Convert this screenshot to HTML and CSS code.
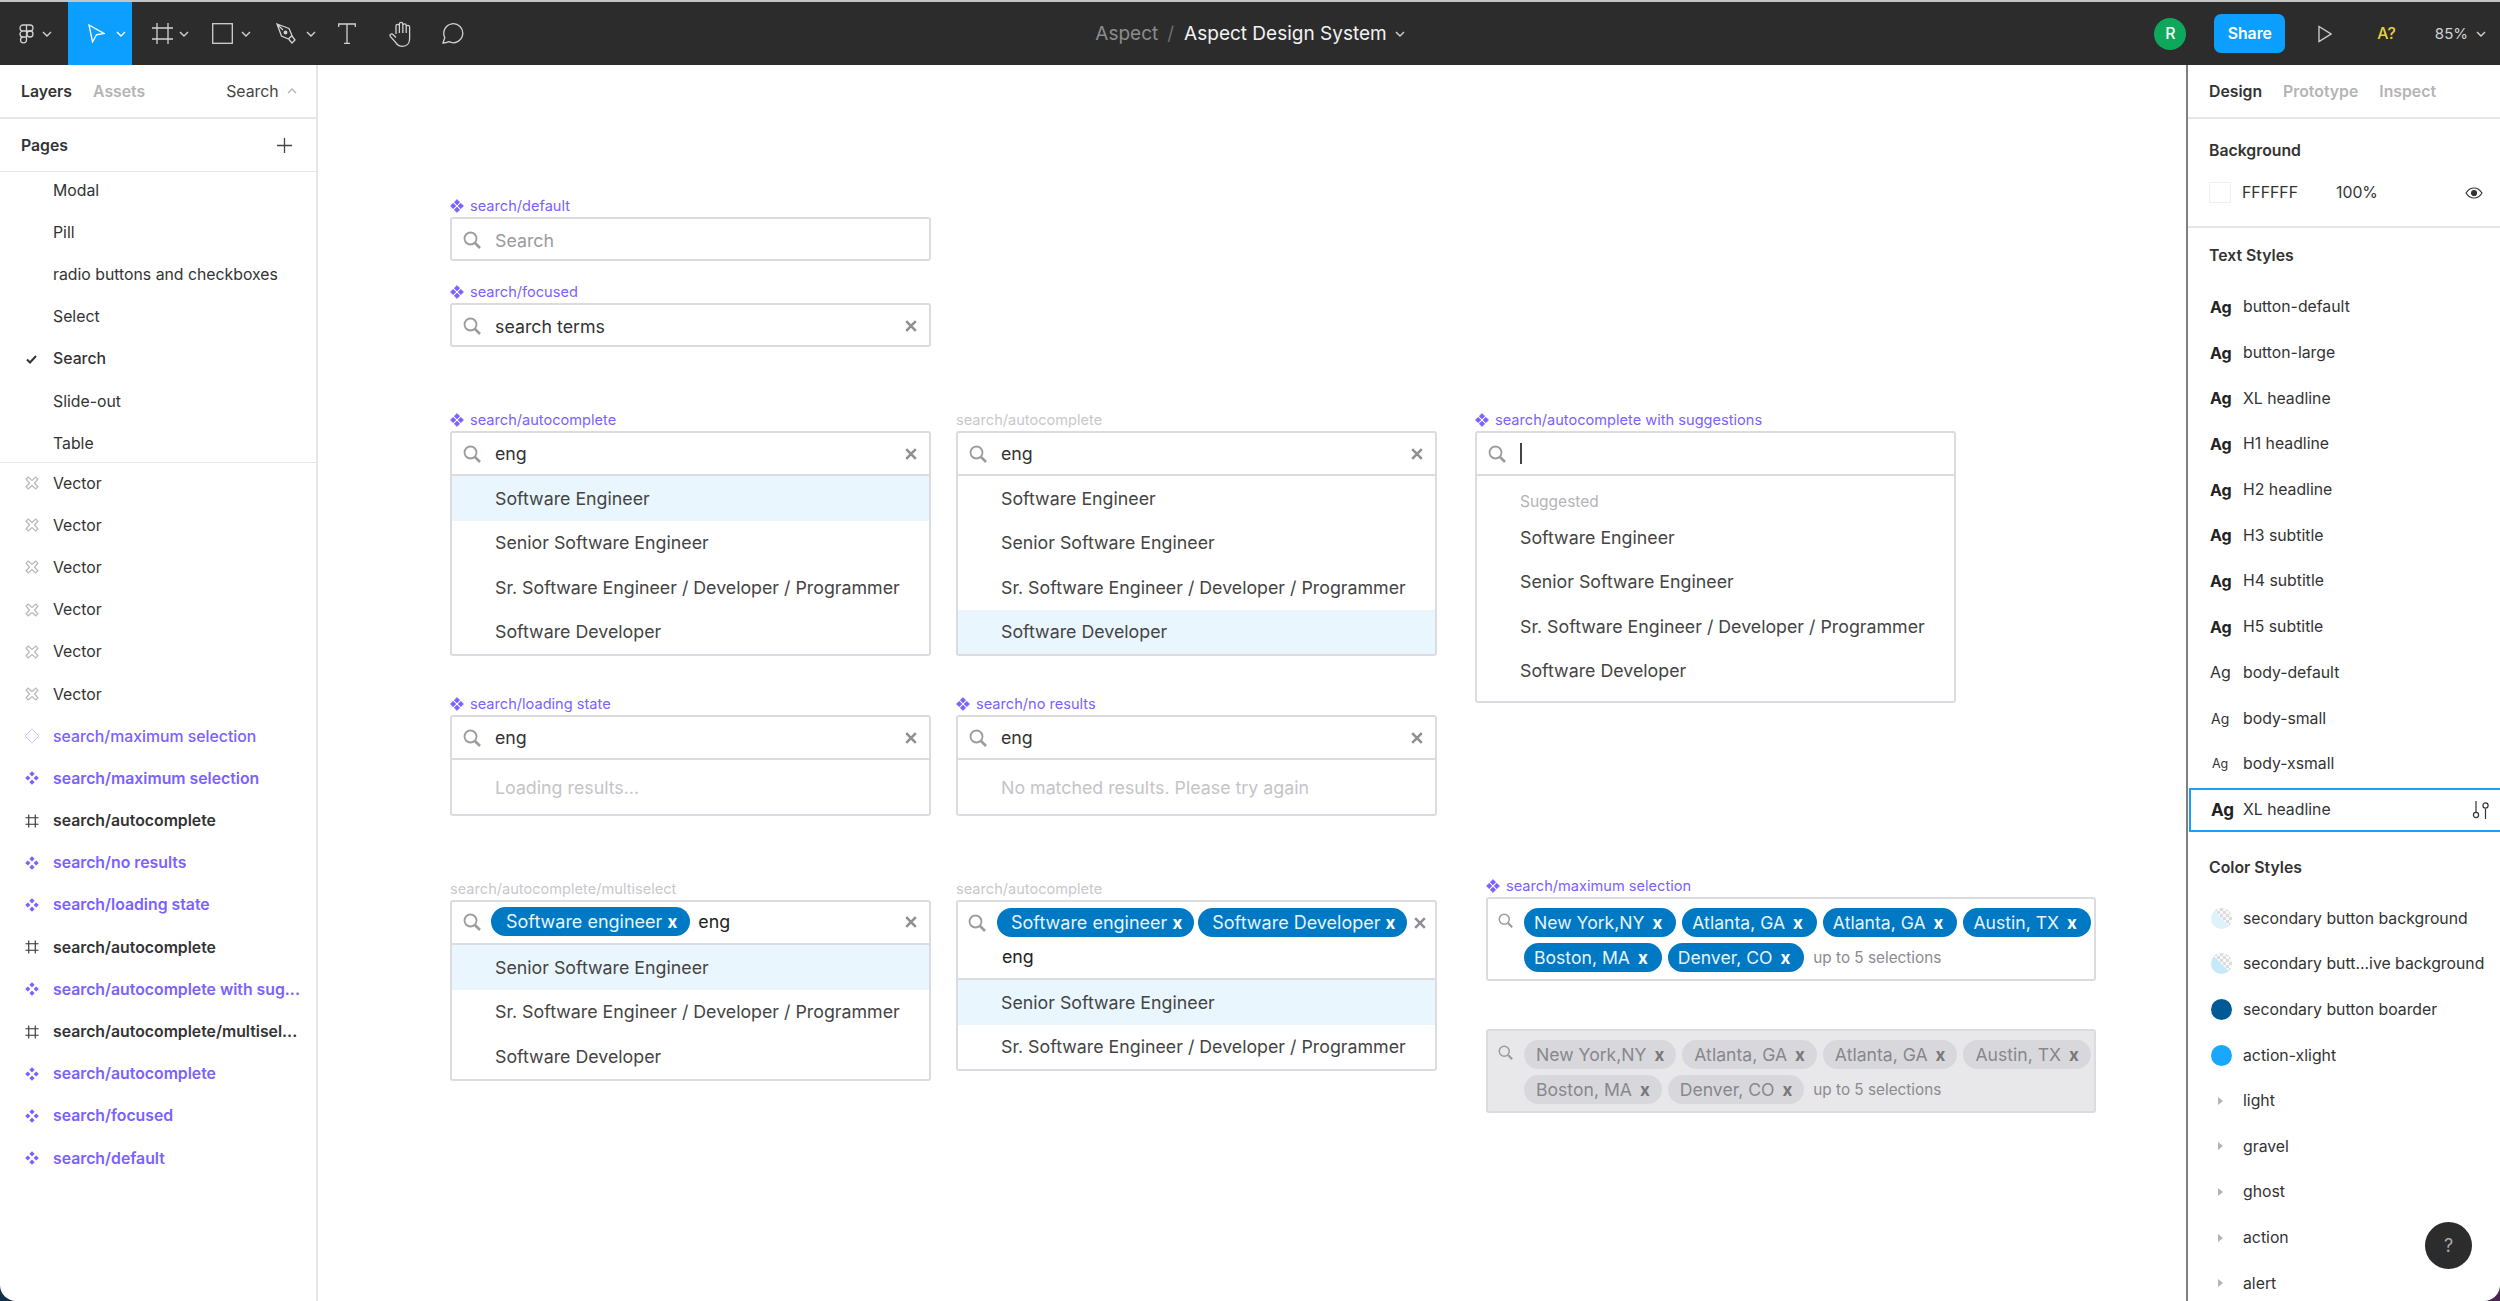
FILE: index.html
```html
<!DOCTYPE html>
<html lang="en">
<head>
    <meta charset="UTF-8">
    <title>Aspect Design System</title>
    <link rel="stylesheet" href="styles.css">
</head>
<body>
    <svg class="sprite" xmlns="http://www.w3.org/2000/svg">
        <symbol id="i-search" viewBox="0 0 18 18"><circle cx="7.5" cy="7.5" r="6" fill="none" stroke="currentColor" stroke-width="1.8"/><path d="M12 12l5 5" stroke="currentColor" stroke-width="2.6" fill="none"/></symbol>
        <symbol id="i-clear" viewBox="0 0 12 12"><path d="M1.2 1.200l9.600 9.600M10.800 1.200l-9.600 9.600" stroke="currentColor" stroke-width="2.500" fill="none"/></symbol>
        <symbol id="i-comp" viewBox="0 0 14 14"><path d="M7 .4l2.800 2.800L7 6 4.200 3.200zM3.200 4.200L6 7 3.200 9.800.4 7zM10.800 4.200L13.600 7l-2.800 2.800L8 7zM7 8l2.800 2.800L7 13.600l-2.800-2.800z" fill="currentColor" stroke="currentColor" stroke-width=".5"/></symbol>
        <symbol id="i-comp-s" viewBox="0 0 14 14"><path d="M7 .2l2.600 2.600L7 5.400 4.400 2.800zM2.800 4.400L5.400 7 2.800 9.600.2 7zM11.200 4.400L13.800 7l-2.600 2.600L8.600 7zM7 8.600l2.600 2.600L7 13.800l-2.600-2.600z" fill="currentColor"/></symbol>
        <symbol id="i-frame" viewBox="0 0 15 15"><path d="M4 .5v14M11 .5v14M.5 4h14M.5 11h14" stroke="currentColor" stroke-width="1.2" fill="none"/></symbol>
        <symbol id="i-vector" viewBox="0 0 13 13"><path d="M1 3l2-2 3.500 3.200L10 1l2 2-3.200 3.500L12 10l-2 2-3.500-3.200L3 12l-2-2 3.200-3.500z" stroke="currentColor" stroke-width="1.100" fill="#fff"/></symbol>
        <symbol id="i-chev" viewBox="0 0 10 6"><path d="M1 1l4 4 4-4" stroke="currentColor" stroke-width="1.400" fill="none"/></symbol>
    </svg>

    <div class="app">
        <header class="topbar">
            <div class="tools">
                <div class="tool tool-logo">
                    <svg class="tool-icon" width="15" height="20" viewBox="0 0 15 20" fill="none" stroke="currentColor" stroke-width="1.300"><path d="M7.500 1H4a3 3 0 0 0 0 6h3.500zM7.500 7H4a3 3 0 0 0 0 6h3.500zM7.500 13H4a3 3 0 1 0 3.500 3zM7.500 1H11a3 3 0 0 1 0 6H7.500z"/><circle cx="11" cy="10" r="3"/></svg>
                    <svg class="chev"><use href="#i-chev"/></svg>
                </div>
                <div class="tool tool-move">
                    <svg class="tool-icon" width="17" height="19" viewBox="0 0 17 19" fill="none" stroke="#fff" stroke-width="1.300"><path d="M1 1l15 8.500-7.500 1.300L4.500 18z"/></svg>
                    <svg class="chev"><use href="#i-chev"/></svg>
                </div>
                <div class="tool tool-frame">
                    <svg class="tool-icon" width="21" height="21" viewBox="0 0 21 21" fill="none" stroke="currentColor" stroke-width="1.300"><path d="M5 0v21M16 0v21M0 5h21M0 16h21"/></svg>
                    <svg class="chev"><use href="#i-chev"/></svg>
                </div>
                <div class="tool tool-rect">
                    <svg class="tool-icon" width="21" height="21" viewBox="0 0 21 21" fill="none" stroke="currentColor" stroke-width="1.300"><rect x=".7" y=".7" width="19.600" height="19.600"/></svg>
                    <svg class="chev"><use href="#i-chev"/></svg>
                </div>
                <div class="tool tool-pen">
                    <svg class="tool-icon" width="20" height="21" viewBox="0 0 20 21" fill="none" stroke="currentColor" stroke-width="1.300"><path d="M1 1l12 4.500 3 7L12.500 16l-7-3zM1 1l6 6M13 16.500l3 3.500 3-3-3-4"/><circle cx="9.500" cy="9.500" r="1.300" fill="currentColor"/></svg>
                    <svg class="chev"><use href="#i-chev"/></svg>
                </div>
                <div class="tool tool-text">
                    <svg class="tool-icon" width="18" height="21" viewBox="0 0 18 21" fill="none" stroke="currentColor" stroke-width="1.300"><path d="M.7 4V1h16.600v3M9 1v19.300M6 20.300h6"/></svg>
                </div>
                <div class="tool tool-hand">
                    <svg class="tool-icon" width="24" height="26" viewBox="0 0 24 26" fill="none" stroke="currentColor" stroke-width="1.300"><path d="M7 13V5a1.700 1.700 0 0 1 3.400 0V3a1.700 1.700 0 0 1 3.400 0v1.500a1.700 1.700 0 0 1 3.400 0V6a1.700 1.700 0 0 1 3.400 0v12c0 4.500-3 7.300-7 7.300-3.500 0-5.500-1.500-7-4L1.300 15.500c-1-2 1-3.500 2.700-2L7 16.500M10.400 5v7M13.800 4.500V12M17.200 5v7"/></svg>
                </div>
                <div class="tool tool-comment">
                    <svg class="tool-icon" width="23" height="21" viewBox="0 0 23 21" fill="none" stroke="currentColor" stroke-width="1.300"><path d="M1 20l1.800-5.500A9.500 9.500 0 1 1 7 18.700 17 17 0 0 1 1 20z"/></svg>
                </div>
            </div>
            <div class="doc-title">
                <span class="doc-team">Aspect</span>
                <span class="doc-slash">/</span>
                <span class="doc-name">Aspect Design System</span>
                <svg class="chev chev-title"><use href="#i-chev"/></svg>
            </div>
            <div class="top-right">
                <span class="avatar">R</span>
                <span class="share">Share</span>
                <svg class="play" width="14" height="18" viewBox="0 0 14 18" fill="none" stroke="currentColor" stroke-width="1.300"><path d="M1 1.500l12 7.500-12 7.500z"/></svg>
                <span class="spell">A?</span>
                <span class="zoom-level">85%</span>
                <svg class="chev chev-zoom"><use href="#i-chev"/></svg>
            </div>
        </header>

        <div class="main">
            <aside class="left-panel">
                <div class="tabs">
                    <span class="tab active">Layers</span>
                    <span class="tab">Assets</span>
                    <span class="tab-search">Search</span>
                    <svg class="chev chev-up"><use href="#i-chev"/></svg>
                </div>
                <div class="pages-head">
                    <span class="panel-title">Pages</span>
                    <svg class="plus" width="15" height="15" viewBox="0 0 15 15" stroke="currentColor" stroke-width="1.300"><path d="M7.500 0v15M0 7.500h15"/></svg>
                </div>
                <ul class="pages">
                    <li>Modal</li>
                    <li>Pill</li>
                    <li>radio buttons and checkboxes</li>
                    <li>Select</li>
                    <li class="current"><svg class="check" width="11" height="9" viewBox="0 0 11 9" fill="none" stroke="currentColor" stroke-width="2"><path d="M1 4.500l3 3 6-6.500"/></svg>Search</li>
                    <li>Slide-out</li>
                    <li>Table</li>
                </ul>
                <ul class="layers">
                    <li><svg class="layer-icon vector"><use href="#i-vector"/></svg>Vector</li>
                    <li><svg class="layer-icon vector"><use href="#i-vector"/></svg>Vector</li>
                    <li><svg class="layer-icon vector"><use href="#i-vector"/></svg>Vector</li>
                    <li><svg class="layer-icon vector"><use href="#i-vector"/></svg>Vector</li>
                    <li><svg class="layer-icon vector"><use href="#i-vector"/></svg>Vector</li>
                    <li><svg class="layer-icon vector"><use href="#i-vector"/></svg>Vector</li>
                    <li class="instance"><svg class="layer-icon outline" viewBox="0 0 16 16" fill="none" stroke="currentColor"><path d="M8 1l7 7-7 7-7-7z"/></svg>search/maximum selection</li>
                    <li class="comp"><svg class="layer-icon"><use href="#i-comp-s"/></svg>search/maximum selection</li>
                    <li class="frame-row"><svg class="layer-icon"><use href="#i-frame"/></svg>search/autocomplete</li>
                    <li class="comp"><svg class="layer-icon"><use href="#i-comp-s"/></svg>search/no results</li>
                    <li class="comp"><svg class="layer-icon"><use href="#i-comp-s"/></svg>search/loading state</li>
                    <li class="frame-row"><svg class="layer-icon"><use href="#i-frame"/></svg>search/autocomplete</li>
                    <li class="comp"><svg class="layer-icon"><use href="#i-comp-s"/></svg>search/autocomplete with sug...</li>
                    <li class="frame-row"><svg class="layer-icon"><use href="#i-frame"/></svg>search/autocomplete/multisel...</li>
                    <li class="comp"><svg class="layer-icon"><use href="#i-comp-s"/></svg>search/autocomplete</li>
                    <li class="comp"><svg class="layer-icon"><use href="#i-comp-s"/></svg>search/focused</li>
                    <li class="comp"><svg class="layer-icon"><use href="#i-comp-s"/></svg>search/default</li>
                </ul>
            </aside>

            <main class="canvas">
                <section class="frame f-default">
                    <div class="frame-label"><svg class="comp-icon"><use href="#i-comp"/></svg>search/default</div>
                    <div class="search-box">
                        <div class="search-head"><svg class="search-icon"><use href="#i-search"/></svg><span class="placeholder">Search</span></div>
                    </div>
                </section>
                <section class="frame f-focused">
                    <div class="frame-label"><svg class="comp-icon"><use href="#i-comp"/></svg>search/focused</div>
                    <div class="search-box">
                        <div class="search-head"><svg class="search-icon"><use href="#i-search"/></svg><span class="query">search terms</span><svg class="clear"><use href="#i-clear"/></svg></div>
                    </div>
                </section>

                <section class="frame f-auto-1">
                    <div class="frame-label"><svg class="comp-icon"><use href="#i-comp"/></svg>search/autocomplete</div>
                    <div class="search-box">
                        <div class="search-head has-list"><svg class="search-icon"><use href="#i-search"/></svg><span class="query">eng</span><svg class="clear"><use href="#i-clear"/></svg></div>
                        <ul class="results">
                            <li class="hover">Software Engineer</li>
                            <li>Senior Software Engineer</li>
                            <li>Sr. Software Engineer / Developer / Programmer</li>
                            <li>Software Developer</li>
                        </ul>
                    </div>
                </section>
                <section class="frame f-auto-2">
                    <div class="frame-label plain">search/autocomplete</div>
                    <div class="search-box">
                        <div class="search-head has-list"><svg class="search-icon"><use href="#i-search"/></svg><span class="query">eng</span><svg class="clear"><use href="#i-clear"/></svg></div>
                        <ul class="results">
                            <li>Software Engineer</li>
                            <li>Senior Software Engineer</li>
                            <li>Sr. Software Engineer / Developer / Programmer</li>
                            <li class="hover">Software Developer</li>
                        </ul>
                    </div>
                </section>
                <section class="frame f-suggest">
                    <div class="frame-label"><svg class="comp-icon"><use href="#i-comp"/></svg>search/autocomplete with suggestions</div>
                    <div class="search-box">
                        <div class="search-head has-list"><svg class="search-icon"><use href="#i-search"/></svg><span class="caret"></span></div>
                        <div class="suggested">Suggested</div>
                        <ul class="results results-suggest">
                            <li>Software Engineer</li>
                            <li>Senior Software Engineer</li>
                            <li>Sr. Software Engineer / Developer / Programmer</li>
                            <li>Software Developer</li>
                        </ul>
                    </div>
                </section>

                <section class="frame f-loading">
                    <div class="frame-label"><svg class="comp-icon"><use href="#i-comp"/></svg>search/loading state</div>
                    <div class="search-box">
                        <div class="search-head has-list"><svg class="search-icon"><use href="#i-search"/></svg><span class="query">eng</span><svg class="clear"><use href="#i-clear"/></svg></div>
                        <div class="status">Loading results...</div>
                    </div>
                </section>
                <section class="frame f-none">
                    <div class="frame-label"><svg class="comp-icon"><use href="#i-comp"/></svg>search/no results</div>
                    <div class="search-box">
                        <div class="search-head has-list"><svg class="search-icon"><use href="#i-search"/></svg><span class="query">eng</span><svg class="clear"><use href="#i-clear"/></svg></div>
                        <div class="status">No matched results. Please try again</div>
                    </div>
                </section>

                <section class="frame f-multi-1">
                    <div class="frame-label plain">search/autocomplete/multiselect</div>
                    <div class="search-box">
                        <div class="search-head has-list head-pills"><svg class="search-icon"><use href="#i-search"/></svg><span class="pill">Software engineer <b>x</b></span><span class="query query-dark">eng</span><svg class="clear"><use href="#i-clear"/></svg></div>
                        <ul class="results">
                            <li class="hover">Senior Software Engineer</li>
                            <li>Sr. Software Engineer / Developer / Programmer</li>
                            <li>Software Developer</li>
                        </ul>
                    </div>
                </section>
                <section class="frame f-multi-2">
                    <div class="frame-label plain">search/autocomplete</div>
                    <div class="search-box">
                        <div class="search-head has-list head-wrap">
                            <div class="head-line"><svg class="search-icon"><use href="#i-search"/></svg><span class="pill">Software engineer <b>x</b></span><span class="pill">Software Developer <b>x</b></span><svg class="clear"><use href="#i-clear"/></svg></div>
                            <span class="query query-dark query-below">eng</span>
                        </div>
                        <ul class="results">
                            <li class="hover">Senior Software Engineer</li>
                            <li>Sr. Software Engineer / Developer / Programmer</li>
                        </ul>
                    </div>
                </section>

                <section class="frame f-max">
                    <div class="frame-label"><svg class="comp-icon"><use href="#i-comp"/></svg>search/maximum selection</div>
                    <div class="search-box max-box">
                        <svg class="search-icon max-icon"><use href="#i-search"/></svg>
                        <div class="max-tags">
                            <div class="max-line">
                                <span class="pill">New York,NY <b>x</b></span>
                                <span class="pill">Atlanta, GA <b>x</b></span>
                                <span class="pill">Atlanta, GA <b>x</b></span>
                                <span class="pill">Austin, TX <b>x</b></span>
                            </div>
                            <div class="max-line">
                                <span class="pill">Boston, MA <b>x</b></span>
                                <span class="pill">Denver, CO <b>x</b></span>
                                <span class="limit">up to 5 selections</span>
                            </div>
                        </div>
                    </div>
                </section>
                <section class="frame f-max-off">
                    <div class="search-box max-box disabled">
                        <svg class="search-icon max-icon"><use href="#i-search"/></svg>
                        <div class="max-tags">
                            <div class="max-line">
                                <span class="pill">New York,NY <b>x</b></span>
                                <span class="pill">Atlanta, GA <b>x</b></span>
                                <span class="pill">Atlanta, GA <b>x</b></span>
                                <span class="pill">Austin, TX <b>x</b></span>
                            </div>
                            <div class="max-line">
                                <span class="pill">Boston, MA <b>x</b></span>
                                <span class="pill">Denver, CO <b>x</b></span>
                                <span class="limit">up to 5 selections</span>
                            </div>
                        </div>
                    </div>
                </section>
            </main>

            <aside class="right-panel">
                <div class="tabs">
                    <span class="tab active">Design</span>
                    <span class="tab">Prototype</span>
                    <span class="tab">Inspect</span>
                </div>
                <div class="bg-section">
                    <div class="panel-title">Background</div>
                    <div class="bg-row">
                        <span class="swatch"></span>
                        <span class="bg-hex">FFFFFF</span>
                        <span class="bg-pct">100%</span>
                        <svg class="eye" width="18" height="12" viewBox="0 0 18 12" fill="none" stroke="currentColor" stroke-width="1.200"><path d="M1 6c2-3.200 4.800-5 8-5s6 1.800 8 5c-2 3.200-4.800 5-8 5S3 9.200 1 6z"/><circle cx="9" cy="6" r="2.500" fill="currentColor"/></svg>
                    </div>
                </div>
                <div class="panel-title styles-title">Text Styles</div>
                <ul class="text-styles">
                    <li><span class="ag ag-b">Ag</span>button-default</li>
                    <li><span class="ag ag-b">Ag</span>button-large</li>
                    <li><span class="ag ag-b">Ag</span>XL headline</li>
                    <li><span class="ag ag-b">Ag</span>H1 headline</li>
                    <li><span class="ag ag-b">Ag</span>H2 headline</li>
                    <li><span class="ag ag-b">Ag</span>H3 subtitle</li>
                    <li><span class="ag ag-b">Ag</span>H4 subtitle</li>
                    <li><span class="ag ag-b">Ag</span>H5 subtitle</li>
                    <li><span class="ag">Ag</span>body-default</li>
                    <li><span class="ag ag-s">Ag</span>body-small</li>
                    <li><span class="ag ag-xs">Ag</span>body-xsmall</li>
                    <li class="selected"><span class="ag ag-b">Ag</span>XL headline
                        <svg class="tune" width="18" height="18" viewBox="0 0 18 18" fill="none" stroke="currentColor" stroke-width="1.200"><path d="M4 0v11M13.500 8v10"/><circle cx="4" cy="14" r="2.600"/><circle cx="13.500" cy="4.500" r="2.600"/></svg>
                    </li>
                </ul>
                <div class="panel-title colors-title">Color Styles</div>
                <ul class="color-styles">
                    <li><span class="dot dot-check"></span>secondary button background</li>
                    <li><span class="dot dot-check dark"></span>secondary butt...ive background</li>
                    <li><span class="dot dot-navy"></span>secondary button boarder</li>
                    <li><span class="dot dot-blue"></span>action-xlight</li>
                    <li class="group"><span class="arrow"></span>light</li>
                    <li class="group"><span class="arrow"></span>gravel</li>
                    <li class="group"><span class="arrow"></span>ghost</li>
                    <li class="group"><span class="arrow"></span>action</li>
                    <li class="group"><span class="arrow"></span>alert</li>
                </ul>
                <button class="help">?</button>
            </aside>
        </div>
    </div>
</body>
</html>
```

FILE: styles.css
```css
* {
    box-sizing: border-box;
}
html, body {
    margin: 0;
    height: 100%;
    overflow: hidden;
}
body {
    font-family: Inter, "Liberation Sans", sans-serif;
    font-size: 15.8px;
    color: #333;
    background: linear-gradient(90deg, #12304a 50%, #4a2450 50%);
}
ul {
    list-style: none;
    margin: 0;
    padding: 0;
}
.sprite {
    position: absolute;
    width: 0;
    height: 0;
}
.app {
    height: 1301px;
    background: white;
    border-radius: 0 0 16px 16px;
    overflow: hidden;
    display: flex;
    flex-direction: column;
}

/* top bar */
.topbar {
    height: 65px;
    flex: none;
    background: #2c2c2c;
    border-top: 2px solid #c4c4c4;
    color: #d2d2d2;
    display: grid;
    grid-template-columns: 1fr auto 1fr;
    align-items: center;
}
.tools {
    display: flex;
    height: 63px;
}
.tool {
    display: flex;
    align-items: center;
    padding-left: 20px;
    gap: 8px;
    flex: none;
}
.tool-logo { width: 68px; padding-left: 19px; }
.tool-move { width: 64px; gap: 11px; background: #0c9fff; color: white; }
.tool-frame { width: 60px; gap: 6px; }
.tool-rect { width: 64px; gap: 8px; }
.tool-pen { width: 62px; gap: 10px; }
.tool-text { width: 51px; }
.tool-hand { width: 53px; }
.tool-comment { width: 50px; }
.chev {
    width: 10px;
    height: 6px;
    flex: none;
}
.doc-title {
    display: flex;
    align-items: center;
    font-size: 19px;
    white-space: nowrap;
}
.doc-team {
    color: #8c8c8c;
}
.doc-slash {
    color: #6e6e6e;
    margin: 0 10px 0 9px;
}
.doc-name {
    color: #f2f2f2;
}
.chev-title {
    margin-left: 8px;
}
.top-right {
    display: flex;
    align-items: center;
    justify-content: flex-end;
    padding-right: 14px;
}
.avatar {
    width: 32px;
    height: 32px;
    border-radius: 50%;
    background: #0da85c;
    color: white;
    font-weight: 500;
    display: flex;
    align-items: center;
    justify-content: center;
}
.share {
    width: 71px;
    height: 39px;
    margin-left: 28px;
    border-radius: 7px;
    background: #0c9fff;
    color: white;
    font-weight: 600;
    display: flex;
    align-items: center;
    justify-content: center;
}
.play {
    margin-left: 33px;
}
.spell {
    margin-left: 45px;
    color: #e6d23e;
    font-weight: 500;
}
.zoom-level {
    margin-left: 39px;
    font-size: 15px;
}
.chev-zoom {
    margin-left: 8px;
}

/* panels */
.main {
    flex: 1;
    display: flex;
    min-height: 0;
}
.left-panel {
    width: 318px;
    flex: none;
    border-right: 2px solid #e6e6e6;
}
.right-panel {
    width: 314px;
    flex: none;
    border-left: 2px solid #808080;
    position: relative;
}
.tabs {
    height: 54px;
    padding-left: 21px;
    display: flex;
    align-items: center;
    gap: 21px;
    border-bottom: 2px solid #e6e6e6;
}
.tab {
    font-weight: 600;
    color: #b4b4b4;
}
.tab.active {
    color: #333;
}
.tab-search {
    margin-left: 60px;
    color: #444;
}
.chev-up {
    margin-left: -13px;
    color: #b4b4b4;
    transform: rotate(180deg);
}
.panel-title {
    font-weight: 600;
    color: #333;
}
.pages-head {
    height: 53px;
    padding: 0 24px 0 21px;
    display: flex;
    align-items: center;
    justify-content: space-between;
    border-bottom: 1px solid #e6e6e6;
}
.plus {
    color: #444;
}
.pages {
    margin-top: -3px;
    height: 294px;
    border-bottom: 1px solid #e6e6e6;
}
.pages li, .layers li {
    height: 42.2px;
    padding-left: 53px;
    display: flex;
    align-items: center;
    position: relative;
    white-space: nowrap;
}
.pages .current {
    font-weight: 500;
}
.check {
    position: absolute;
    left: 26px;
    top: 17px;
}
.layers {
    margin-top: -1px;
}
.frame-row {
    font-weight: 600;
}
.layer-icon {
    position: absolute;
    left: 25px;
    top: 50%;
    width: 14px;
    height: 14px;
    margin-top: -7px;
    color: #333;
}
.layer-icon.vector {
    color: #b8b8b8;
}
.layer-icon.outline {
    left: 24px;
    width: 16px;
    height: 16px;
    margin-top: -8px;
    color: #c9bfff;
}
.instance {
    color: #7b61ff;
    font-weight: 500;
}
.comp {
    color: #7b61ff;
    font-weight: 600;
}
.comp .layer-icon {
    color: #7b61ff;
}

/* canvas */
.canvas {
    flex: 1;
    position: relative;
    overflow: hidden;
    background: white;
}
.frame {
    position: absolute;
    width: 481px;
}
.f-default { left: 132px; top: 131px; }
.f-focused { left: 132px; top: 217px; }
.f-auto-1 { left: 132px; top: 345px; }
.f-auto-2 { left: 638px; top: 345px; }
.f-suggest { left: 1157px; top: 345px; }
.f-loading { left: 132px; top: 629px; }
.f-none { left: 638px; top: 629px; }
.f-multi-1 { left: 132px; top: 814px; }
.f-multi-2 { left: 638px; top: 814px; }
.f-max { left: 1168px; top: 811px; width: 610px; }
.f-max-off { left: 1168px; top: 964px; width: 610px; }
.frame-label {
    height: 19px;
    margin-bottom: 2px;
    display: flex;
    align-items: center;
    gap: 6px;
    font-size: 14.6px;
    color: #7b61ff;
    white-space: nowrap;
}
.frame-label.plain {
    color: #c8c8cc;
}
.comp-icon {
    width: 14px;
    height: 14px;
    flex: none;
}
.search-box {
    border: 2px solid #dcdce0;
    border-radius: 3px;
    background: white;
}
.search-head {
    height: 40px;
    padding: 2px 12px 0 11px;
    display: flex;
    align-items: center;
}
.search-head.has-list {
    height: 43px;
    padding-top: 0;
    border-bottom: 2px solid #dcdce0;
}
.search-icon {
    width: 18px;
    height: 18px;
    flex: none;
    color: #9c9c9f;
    margin-right: 14px;
}
.placeholder {
    font-size: 17.8px;
    color: #9a9a9e;
}
.query {
    font-size: 17.8px;
    color: #333;
}
.query-dark {
    color: #222;
}
.clear {
    width: 12px;
    height: 12px;
    margin-left: auto;
    flex: none;
    color: #8e8e93;
}
.caret {
    width: 2px;
    height: 21px;
    background: #444;
}
.results li {
    height: 44.5px;
    padding-left: 43px;
    display: flex;
    align-items: center;
    font-size: 17.8px;
    color: #444;
    white-space: nowrap;
}
.results li.hover {
    background: #e9f6fd;
}
.suggested {
    padding: 13px 0 0 43px;
    line-height: 26px;
    font-size: 15.5px;
    color: #b4b4b8;
}
.results-suggest {
    padding-bottom: 8px;
}
.status {
    height: 54px;
    padding-left: 43px;
    display: flex;
    align-items: center;
    font-size: 17.8px;
    color: #c4c4c8;
}

/* pills */
.pill {
    height: 29px;
    padding: 0 13px 0 15px;
    border-radius: 15px;
    background: #0079c4;
    color: #e6f4fc;
    font-size: 18px;
    display: inline-flex;
    align-items: center;
    white-space: pre;
    flex: none;
}
.pill b {
    color: white;
    font-size: 17px;
    font-weight: 700;
}
.search-head.head-pills {
    padding-bottom: 2px;
}
.head-pills .search-icon {
    margin-right: 10px;
}
.head-pills .query {
    margin-left: 8px;
}
.search-head.head-wrap {
    display: block;
    height: 78px;
    padding: 6px 9px 0 10px;
}
.head-line {
    display: flex;
    align-items: center;
    gap: 4px;
}
.head-line .search-icon {
    margin-right: 7px;
}
.head-line .pill {
    padding-left: 14px;
    padding-right: 12px;
}
.query-below {
    display: block;
    margin: 7px 0 0 34px;
    line-height: 26px;
}
.max-box {
    height: 84px;
    padding: 9px 0 0 10px;
    display: flex;
    align-items: flex-start;
}
.max-icon {
    width: 15px;
    height: 15px;
    margin: 5px 11px 0 0;
}
.max-tags {
    display: flex;
    flex-direction: column;
    gap: 6px;
}
.max-line {
    display: flex;
    align-items: center;
    gap: 6px;
}
.max-tags .pill {
    padding: 0 14px 0 10px;
    font-size: 17.6px;
}
.max-tags .pill b {
    margin-left: 3px;
}
.limit {
    font-size: 15.3px;
    color: #8b8b90;
    margin-left: 3px;
}
.disabled {
    background: #e8e8ea;
}
.disabled .pill {
    background: #d8d8dc;
    color: #87878c;
}
.disabled .max-tags .pill {
    padding: 0 12px;
}
.disabled .pill b {
    color: #78787d;
}

/* right panel */
.bg-section {
    height: 109px;
    padding: 22px 17px 0 21px;
    border-bottom: 2px solid #e6e6e6;
}
.bg-row {
    margin-top: 22px;
    display: flex;
    align-items: center;
}
.swatch {
    width: 22px;
    height: 21px;
    border: 1px solid #eee;
    background: white;
}
.bg-hex {
    width: 94px;
    margin-left: 11px;
}
.eye {
    margin-left: auto;
}
.styles-title {
    margin: 19px 0 0 21px;
    line-height: 18px;
}
.text-styles {
    margin-top: 19px;
}
.text-styles li {
    height: 45.7px;
    padding-left: 22px;
    display: flex;
    align-items: center;
    position: relative;
    white-space: nowrap;
}
.ag {
    width: 33px;
    flex: none;
    font-size: 16px;
    color: #333;
}
.ag-b {
    font-size: 16px;
    font-weight: 700;
    color: #222;
}
.ag-s {
    font-size: 14px;
    padding-left: 1px;
}
.ag-xs {
    font-size: 12.5px;
    padding-left: 2px;
}
.text-styles .selected {
    height: 44px;
    margin: 1px 0 0 1px;
    border: 2px solid #18a0fb;
    border-right: 0;
    padding-left: 20px;
}
.selected .ag-b {
    width: 32px;
    font-size: 17px;
}
.tune {
    position: absolute;
    right: 10px;
    top: 11px;
}
.colors-title {
    margin: 27px 0 0 21px;
    line-height: 18px;
}
.color-styles {
    margin-top: 19px;
}
.color-styles li {
    height: 45.6px;
    padding-left: 23px;
    display: flex;
    align-items: center;
    white-space: nowrap;
}
.dot {
    width: 21px;
    height: 21px;
    border-radius: 50%;
    margin-right: 11px;
    flex: none;
    position: relative;
    overflow: hidden;
}
.dot-check {
    background: #dff1fb;
}
.dot-check.dark {
    background: #c6e8fb;
}
.dot-check::after {
    content: "";
    position: absolute;
    inset: 0;
    background: repeating-conic-gradient(#dcdcdc 0 25%, #f8f8f8 0 50%) 0 0 / 6px 6px;
    clip-path: polygon(0 0, 100% 0, 100% 100%);
}
.dot-navy {
    background: #005a96;
}
.dot-blue {
    background: #18a8ff;
}
.arrow {
    width: 0;
    height: 0;
    margin: 0 20px 0 7px;
    border-left: 5px solid #b4b4b4;
    border-top: 4px solid transparent;
    border-bottom: 4px solid transparent;
}
.help {
    position: absolute;
    right: 28px;
    top: 1157px;
    width: 47px;
    height: 47px;
    padding: 0;
    border: none;
    border-radius: 50%;
    background: #2c2c2c;
    color: #aaa;
    font: 400 18px Inter, "Liberation Sans", sans-serif;
}
```
